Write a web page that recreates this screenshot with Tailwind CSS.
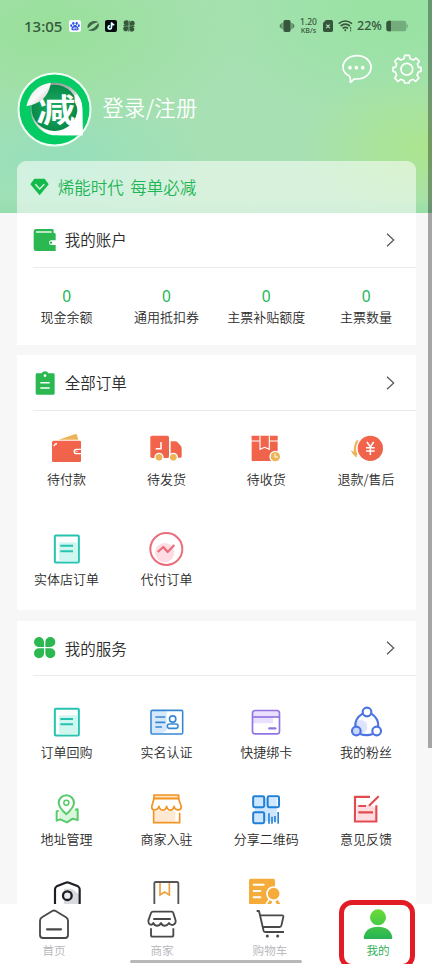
<!DOCTYPE html>
<html lang="zh-CN">
<head>
<meta charset="utf-8">
<meta name="viewport" content="width=device-width, initial-scale=1">
<title>我的</title>
<script src="https://cdn.jsdelivr.net/npm/@tailwindcss/browser@4"></script>
</head>
<body class="bg-[#f7f7f7]">
<div class="relative flex flex-col w-[432px] h-[964px] overflow-hidden bg-[#f7f7f7] font-['Noto_Sans_CJK_SC','Noto_Sans',sans-serif] font-[350] text-[#2b2b2b]">

  <!-- Header -->
  <header class="shrink-0 h-[212.5px] bg-[linear-gradient(to_bottom,transparent_93%,rgba(138,218,166,0.55)_100%),radial-gradient(ellipse_130px_80px_at_425px_148px,#abe590_5%,transparent_100%),radial-gradient(ellipse_200px_110px_at_50px_30px,#99e09a_0%,transparent_100%),radial-gradient(ellipse_150px_80px_at_60px_160px,#95dfbb_0%,transparent_100%),radial-gradient(ellipse_200px_120px_at_400px_10px,#9ae2a4_20%,transparent_100%),linear-gradient(#a7e0b3,#a7e0b3)]">
    <!-- Status bar -->
    <div class="flex items-center h-[52px] pl-6 pr-6 text-[#36573c] font-['Noto_Sans']">
      <span class="w-[45px] text-[15px] leading-none font-medium">13:05</span>
      <div class="flex gap-[6px]">
        <svg width="12" height="12" viewBox="0 0 36 36"><rect width="36" height="36" rx="7" fill="#fff"/><g fill="#3159e0"><ellipse cx="13" cy="10" rx="3.4" ry="5"/><ellipse cx="23" cy="10" rx="3.4" ry="5"/><ellipse cx="6.500" cy="17" rx="3" ry="4.300"/><ellipse cx="29.500" cy="17" rx="3" ry="4.300"/><path d="M18 15c6 0 11 8 11 12s-5 5-11 4c-6 1-11 0-11-4s5-12 11-12Z"/></g><path d="M13 23v4h4v-6M21 21v6h4" stroke="#fff" stroke-width="2" fill="none"/></svg>
        <svg width="12" height="12" viewBox="0 0 36 36" fill="#41664a"><path d="M2 24C-2 10 16-2 34 6 20 4 8 10 2 24ZM34 8C42 24 20 38 3 30 18 32 28 24 34 8Z"/><path d="M34 6C24 8 14 12 7 22L2 25Q4 6 22 3ZM3 30c10-2 20-5 26-15l5-4Q33 28 17 33Z"/></svg>
        <svg width="12" height="12" viewBox="0 0 36 36"><rect width="36" height="36" rx="6" fill="#08090d"/><path d="M20 7v15a5 5 0 1 1-5-5M20 8c1 4 4 6 8 6" transform="translate(-1.500 1)" stroke="#26e4e4" stroke-width="4" fill="none"/><path d="M20 7v15a5 5 0 1 1-5-5M20 8c1 4 4 6 8 6" stroke="#fff" stroke-width="4" fill="none"/></svg>
        <svg width="12" height="12" viewBox="0 0 36 36" fill="#36573c"><path d="M17 17V5C15-1 2-1 2 8c0 5 4 6 8 6-6 0-10 0-9 4ZM19 17h12c6-2 6-15-3-15-5 0-6 4-6 8 0-6 0-10-3-9ZM19 19v12c2 6 15 6 15-3 0-5-4-6-8-6 6 0 10 0 9-4ZM17 19H5c-6 2-6 15 3 15 5 0 6-4 6-8 0 6 0 10 3 9Z"/></svg>
      </div>
      <div class="flex items-center ml-auto">
        <svg width="16" height="14" viewBox="0 0 48 42" class="mr-1"><rect x="13" y="3" width="22" height="36" rx="6" fill="#36573c"/><path d="M9 12v18M4 16v10M39 12v18M44 16v10" stroke="#36573c" stroke-width="2.800"/></svg>
        <div class="flex flex-col w-[19px] mr-[5px] text-center font-medium"><span class="text-[8.500px] leading-[9px]">1.20</span><span class="text-[7.200px] leading-[9px] whitespace-nowrap">KB/s</span></div>
        <svg width="10" height="12" viewBox="0 0 30 36" class="mr-[5px]"><path d="M9 0h16q5 0 5 5v26q0 5-5 5H5q-5 0-5-5V9Z" fill="#36573c"/><path d="m10 14 10 10m0-10L10 24" stroke="#a8dfb0" stroke-width="3.500"/></svg>
        <svg width="15" height="12" viewBox="0 0 45 36" fill="none" stroke="#36573c" stroke-width="4.800" class="mr-[4px]"><path d="M2 11Q22-5 42 11M8 18Q22 7 36 18M14 25q8-6 16 0"/><circle cx="22" cy="31" r="3" fill="#36573c" stroke="none"/><path d="M38 21v6m0 2v5" stroke-width="3"/></svg>
        <span class="w-[25px] mr-[4px] pt-px text-[12.500px] leading-none font-medium">22%</span>
        <svg width="22" height="12" viewBox="0 0 66 36"><rect x="1" y="2" width="60" height="32" rx="8" fill="#36573c" fill-opacity=".38"/><path d="M9 2h6v32H9q-8 0-8-8V10q0-8 8-8Z" fill="#36573c"/><path d="M62 11q4 3 4 7t-4 7Z" fill="#36573c" fill-opacity=".38"/></svg>
      </div>
    </div>
    <!-- User -->
    <div class="flex h-[109px] pl-[16.500px] pr-[9.500px]">
      <svg class="mt-[19.500px] shrink-0" width="75" height="75" viewBox="50 215 224 224">
        <defs>
          <linearGradient id="peel" x1="0" y1="0" x2="1" y2="1"><stop offset="0" stop-color="#d5d9d7"/><stop offset=".5" stop-color="#fbfbfb"/><stop offset="1" stop-color="#a9afac"/></linearGradient>
          <linearGradient id="rim" x1="0" y1="0" x2=".8" y2="1"><stop offset="0" stop-color="#7c8480"/><stop offset=".4" stop-color="#a9b0ac"/><stop offset=".7" stop-color="#fff"/></linearGradient>
          <radialGradient id="well"><stop offset="0" stop-color="#1fae62"/><stop offset="1" stop-color="#078a49"/></radialGradient>
        </defs>
        <circle cx="162" cy="327" r="107.500" fill="#05cb65" stroke="#f4fff7" stroke-width="6"/>
        <path d="M155 247c50-2 88 30 90 76l1 81h-90a80 80 0 0 1-1-157Z" fill="url(#rim)"/>
        <circle cx="162" cy="322" r="69" fill="url(#well)"/>
        <text x="108" y="364" font-size="94" font-weight="700" textLength="116" lengthAdjust="spacingAndGlyphs" fill="#fff" font-family="Noto Sans CJK SC">减</text>
        <path d="M222 283h7q16 16 16 40l1 81h-74q44-7 58-42 8-28-8-59Z" fill="#fff"/>
        <path d="M151 247c-6 36-25 62-73 70 9-38 33-65 73-70Z" fill="url(#peel)"/>
      </svg>
      <div class="mt-[40px] ml-[11px] h-[30px] leading-[30px] text-[21.300px] tracking-[0.300px] text-white">登录/注册</div>
      <div class="flex gap-[18px] ml-auto mt-[1px]">
        <svg width="32" height="32" viewBox="374 160 96 96" fill="none" stroke="#fff" stroke-width="5"><path d="M400 230c-14-7-20-15-20-27 0-20 18-35 42-35s42 15 42 35-18 35-42 35l-8 0-12 10q2-10-2-18Z" stroke-linejoin="round"/><g fill="#fff" stroke="none"><circle cx="401" cy="204" r="5.500"/><circle cx="420" cy="204" r="5.500"/><circle cx="439" cy="204" r="5.500"/></g></svg>
        <svg width="32" height="32" viewBox="524 160 96 96" fill="none" stroke="#fff" stroke-width="5" stroke-linejoin="round"><path d="M565 167h14l2 10 10 4 8-6 10 10-6 8 4 10 7 0v12l-8 2-4 10 6 8-10 10-8-6-10 4-2 7h-13l-2-7-10-4-8 6-10-10 6-8-4-10-7-2v-12l7 0 4-10-6-8 10-10 8 6 10-4Z"/><circle cx="571.500" cy="208.500" r="17.500"/></svg>
      </div>
    </div>
    <!-- Slogan banner -->
    <div class="flex items-center ml-[16.700px] w-[399.300px] h-[51.500px] pl-[13px] rounded-t-[9px] bg-white/55">
      <svg width="19" height="18" viewBox="90 82 57 54"><path d="M103 84h31l12 17-27 33-28-33Z" fill="#12bb4b"/><path d="m106 101 13 14 14-14" fill="none" stroke="#d3f2df" stroke-width="4.500"/></svg>
      <span class="ml-[9px] text-[16.500px] leading-6 [word-spacing:3px] text-[#21b555]">烯能时代 每单必减</span>
    </div>
  </header>

  <!-- Account -->
  <section class="shrink-0 ml-[16.700px] w-[399.300px] h-[132.500px] bg-white">
    <div class="flex items-center h-[55px] ml-4 border-b border-[#ebebeb]">
      <svg width="24" height="24" viewBox="98 234 72 72"><path d="M106 237h50q4 0 4 4v8h2q4 0 4 4v18h-13q-7 0-7 7t7 7h13v18h-59q-7 0-7-7v-51q0-8 6-8Z" fill="#2bb850"/><path d="M107 246h47" stroke="#fff" stroke-width="4"/><circle cx="152" cy="278" r="3.500" fill="#2bb850"/></svg>
      <h2 class="ml-[8px] pb-[2px] text-[15.500px] leading-6">我的账户</h2>
      <svg class="ml-auto mr-[20px]" width="11" height="14" viewBox="0 0 11 14" fill="none" stroke="#555" stroke-width="1.200"><path d="m2 .8 6.700 6.200L2 13.200"/></svg>
    </div>
    <div class="grid grid-cols-4 pt-[18.500px] text-center">
      <div><div class="font-['Noto_Sans'] font-normal text-[15.500px] leading-5 text-[#21b555]">0</div><div class="mt-[1px] text-[13px] leading-5">现金余额</div></div>
      <div><div class="font-['Noto_Sans'] font-normal text-[15.500px] leading-5 text-[#21b555]">0</div><div class="mt-[1px] text-[13px] leading-5">通用抵扣券</div></div>
      <div><div class="font-['Noto_Sans'] font-normal text-[15.500px] leading-5 text-[#21b555]">0</div><div class="mt-[1px] text-[13px] leading-5">主票补贴额度</div></div>
      <div><div class="font-['Noto_Sans'] font-normal text-[15.500px] leading-5 text-[#21b555]">0</div><div class="mt-[1px] text-[13px] leading-5">主票数量</div></div>
    </div>
  </section>

  <!-- Orders -->
  <section class="shrink-0 mt-[10px] ml-[16.700px] w-[399.300px] h-[255px] bg-white">
    <div class="flex items-center h-[56px] ml-4 border-b border-[#ebebeb]">
      <svg width="24" height="24" viewBox="100 61 72 72"><path d="M112 68h14q2-6 10-6t10 6h15q4 0 4 4v56q0 4-4 4h-49q-4 0-4-4V72q0-4 4-4Z" fill="#2bb850"/><circle cx="136" cy="75" r="4" fill="#fff"/><path d="M122 96h28M122 112h28" stroke="#fff" stroke-width="4.500"/></svg>
      <h2 class="ml-[8px] pb-[2px] text-[15.500px] leading-6">全部订单</h2>
      <svg class="ml-auto mr-[20px]" width="11" height="14" viewBox="0 0 11 14" fill="none" stroke="#555" stroke-width="1.200"><path d="m2 .8 6.700 6.200L2 13.200"/></svg>
    </div>
    <svg width="0" height="0" class="absolute"><defs><linearGradient id="red" x1="0" y1="0" x2="1" y2="1"><stop offset="0" stop-color="#f8644c"/><stop offset="1" stop-color="#e9634a"/></linearGradient></defs></svg>
    <div class="grid grid-cols-4 auto-rows-[99.500px] pt-[18px] text-center text-[13px] leading-5">
      <div class="flex flex-col items-center">
        <svg width="40" height="40" viewBox="141 237 120 120"><path d="m176 269 50-17q4-1 5 3l4 14Z" fill="#edb457"/><path d="M161 272h78q4 0 4 4v20h-14a8 8 0 0 0 0 17h14v19q0 4-4 4h-79q-4 0-4-4v-55q0-5 5-5Z" fill="url(#red)"/><path d="M160 289q1-9 11-11v5q-6 1-7 6Z" fill="#fff"/><path d="M243 300h-13a4.500 4.500 0 0 0 0 9h13Z" fill="#ee5a43"/><circle cx="231" cy="304.500" r="2" fill="#fff"/></svg>
        <span class="-mt-[0.500px]">待付款</span>
      </div>
      <div class="flex flex-col items-center">
        <svg width="40" height="40" viewBox="440 237 120 120"><path d="M458 257h46q5 0 5 5v62h-51q-5 0-5-5v-57q0-5 5-5Z" fill="url(#red)"/><path d="M514 274h13q5 0 9 4l8 9q3 3 3 8v24q0 4-4 4h-29Z" fill="url(#red)"/><path d="M485 276v20h-16" stroke="#fff" stroke-width="4.500" fill="none"/><g fill="#edb457" stroke="#fff" stroke-width="4"><circle cx="479" cy="322" r="12"/><circle cx="522" cy="322" r="12"/></g></svg>
        <span class="-mt-[0.500px]">待发货</span>
      </div>
      <div class="flex flex-col items-center">
        <svg width="40" height="40" viewBox="91 237 120 120"><rect x="108" y="257" width="78" height="76" rx="2" fill="url(#red)"/><path d="M107 273h26m28 0h26" stroke="#fff" stroke-width="3.500"/><path d="M133 257v41l14-6 14 6v-41" fill="none" stroke="#fff" stroke-width="3.500"/><circle cx="179" cy="320" r="16" fill="#edb457" stroke="#fff" stroke-width="4"/><path d="M178 311v10h9" stroke="#fff" stroke-width="3" fill="none"/></svg>
        <span class="-mt-[0.500px]">待收货</span>
      </div>
      <div class="flex flex-col items-center">
        <svg width="40" height="40" viewBox="390 237 120 120"><path d="M425 271q-14 20-3 45" stroke="#edb457" stroke-width="6" fill="none"/><path d="M404 301l9 4q-1-20 12-34l-5 15q-5 18 3 35l-3 1q-10-7-16-21Z" fill="#edb457"/><circle cx="463" cy="295" r="38" fill="url(#red)"/><path d="m453 276 10 15 10-15M463 291v24M450 293h26M450 303h26" stroke="#fff" stroke-width="4.500" fill="none"/></svg>
        <span class="-mt-[0.500px]">退款/售后</span>
      </div>
      <div class="flex flex-col items-center">
        <svg width="40" height="40" viewBox="141 54 120 120"><rect x="164.500" y="73.500" width="72" height="81" rx="3" fill="#fff" stroke="#25c3b0" stroke-width="6"/><path d="M177 94h57v57h-57Z" fill="#cff7f0"/><path d="M181 104h38M181 121h38" stroke="#25c3b0" stroke-width="6"/></svg>
        <span>实体店订单</span>
      </div>
      <div class="flex flex-col items-center">
        <svg width="40" height="40" viewBox="440 54 120 120" fill="none" stroke="#ea6d7c" stroke-width="6"><circle cx="496" cy="125" r="29" fill="#ffdbe3" stroke="none"/><circle cx="501" cy="114" r="48"/><path d="m475 123 17-15 13 15 20-21" stroke-width="6.500" stroke-linejoin="round"/></svg>
        <span>代付订单</span>
      </div>
    </div>
  </section>

  <!-- Services -->
  <section class="flex-1 min-h-0 overflow-hidden mt-[11px] ml-[16.700px] w-[399.300px] bg-white">
    <div class="flex items-center h-[55px] ml-4 border-b border-[#ebebeb]">
      <svg width="24" height="24" viewBox="98 380 72 72" fill="#2bb850"><path d="M131 413h-14a15 15 0 1 1 14-15ZM135 413v-15a15 15 0 1 1 15 15ZM131 417v15a15 15 0 1 1-15-15ZM135 417h15a15 15 0 1 1-15 15Z"/></svg>
      <h2 class="ml-[8px] pb-[1px] text-[15.500px] leading-6">我的服务</h2>
      <svg class="ml-auto mr-[20px]" width="11" height="14" viewBox="0 0 11 14" fill="none" stroke="#555" stroke-width="1.200"><path d="m2 .8 6.700 6.200L2 13.200"/></svg>
    </div>
    <div class="grid grid-cols-4 auto-rows-[87.400px] pt-[25.700px] text-center text-[13px] leading-5">
      <div class="flex flex-col items-center">
        <svg width="40" height="40" viewBox="141 35 120 120"><rect x="164.500" y="55.500" width="72" height="80" rx="3" fill="#fff" stroke="#25c3b0" stroke-width="6"/><path d="M177 75h57v57h-57Z" fill="#cff7f0"/><path d="M181 86h38M181 102h38" stroke="#25c3b0" stroke-width="6"/></svg>
        <span>订单回购</span>
      </div>
      <div class="flex flex-col items-center">
        <svg width="40" height="40" viewBox="440 35 120 120" fill="none" stroke="#3788d4" stroke-width="4.800"><path d="M456 62h46v58l-14 9h-32Z" fill="#d5e8fc" stroke="none"/><rect x="455" y="60" width="95" height="71" rx="4"/><path d="M468 80h30M468 96h30M468 110h20" stroke-width="5"/><circle cx="520" cy="86" r="9.500"/><rect x="504" y="101" width="32" height="13" rx="6"/></svg>
        <span>实名认证</span>
      </div>
      <div class="flex flex-col items-center">
        <svg width="40" height="40" viewBox="91 35 120 120" fill="none" stroke="#9275e3" stroke-width="5"><path d="M112 62h77v17h-17v20h-60Z" fill="#e8e0fd" stroke="none"/><rect x="110.500" y="60.500" width="81" height="70" rx="8"/><path d="M111 80h80"/><path d="M161 114h18" stroke-width="7" stroke-linecap="round"/></svg>
        <span>快捷绑卡</span>
      </div>
      <div class="flex flex-col items-center">
        <svg width="40" height="40" viewBox="390 35 120 120" fill="none" stroke="#4c74e3" stroke-width="6.500"><circle cx="434" cy="109" r="20" fill="#dde4fd" stroke="none"/><path d="M440 70q-24 14-22 40M466 70q22 14 21 39M432 131q21 7 38 0"/><circle cx="453" cy="65" r="13" fill="#fff"/><circle cx="421" cy="122" r="13" fill="#c8d8fb"/><circle cx="482" cy="122" r="13" fill="#fff"/></svg>
        <span>我的粉丝</span>
      </div>
      <div class="flex flex-col items-center">
        <svg width="40" height="40" viewBox="141 297 120 120" fill="none" stroke="#5acb6a" stroke-width="6" stroke-linejoin="round"><path d="M178 358l22 20 20-20 13-2v34l-16-6-15 12-24-8Z" fill="#d8f7dc" stroke="none"/><path d="M199 373c-15-14-23-24-23-34a23 23 0 0 1 46 0c0 10-8 20-23 34Z" fill="#fff"/><circle cx="199" cy="338" r="7.500" stroke-width="4.500"/><path d="M176 362l-6 2v28l11-4 20 9 17-11 15 4v-32l-8 1"/></svg>
        <span>地址管理</span>
      </div>
      <div class="flex flex-col items-center">
        <svg width="40" height="40" viewBox="440 297 120 120" fill="none" stroke="#f19424" stroke-width="5" stroke-linejoin="round"><path d="M465 363h63v34h-63Z" fill="#ffe9d2" stroke="none"/><path d="M464 315h74v11h-74Z" fill="#ffe0b8"/><path d="M463 362v36h78v-30"/><path d="M464 326l-7 24c0 13 18 14 22-1 3 15 20 15 23 0 3 15 20 15 22 0 4 15 22 13 22 1l-8-24Z" fill="#fff"/></svg>
        <span>商家入驻</span>
      </div>
      <div class="flex flex-col items-center">
        <svg width="40" height="40" viewBox="91 297 120 120" fill="none" stroke="#2080d7" stroke-width="6"><path d="M118 324h65v70h-65Z" fill="#cfe6ff" stroke="none"/><rect x="112.500" y="318.500" width="33" height="33" rx="4" fill="#cfe6ff"/><path d="M160 318.500h26q4 0 4 4v25q0 4-4 4h-26q-4 0-4-4v-25q0-4 4-4Z"/><rect x="112.500" y="366.500" width="33" height="33" rx="4" fill="#cfe6ff"/><path d="M160 370v31M169 380v21M178 378v19M187.500 366v35" stroke-width="4.800"/></svg>
        <span>分享二维码</span>
      </div>
      <div class="flex flex-col items-center">
        <svg width="40" height="40" viewBox="390 297 120 120" fill="none" stroke="#e24c50" stroke-width="6.500"><path d="M423 345h41l16 10v37h-57Z" fill="#ffdcdf" stroke="none"/><path d="M462 320.500h-45v74h64v-49"/><path d="m459 347 29-28M427 348h23M427 367h44"/></svg>
        <span>意见反馈</span>
      </div>
      <div class="flex flex-col items-center">
        <svg width="40" height="40" viewBox="141 49 120 120" fill="none" stroke="#1c1e26" stroke-width="6.500" stroke-linejoin="round"><path d="M192 87h24l22 18v28h-46Z" fill="#d9d9df" stroke="none"/><path d="M165 135V89q0-6 5-9l27-11q5-2 10 0l27 11q5 3 5 9v46"/><circle cx="202" cy="108" r="13" stroke-width="7" fill="#ececf0"/></svg>
      </div>
      <div class="flex flex-col items-center">
        <svg width="40" height="40" viewBox="440 49 120 120" fill="none" stroke="#555" stroke-width="5.500"><path d="M465 135V71q0-4 4-4h64q4 0 4 4v64"/><path d="M482 70v36l14-9 14 9V70" stroke="#f2a03c" stroke-width="5"/></svg>
      </div>
      <div class="flex flex-col items-center">
        <svg width="40" height="40" viewBox="91 49 120 120"><path d="M105 57h68q5 0 5 5v72h-78V62q0-5 5-5Z" fill="#f6ac3b"/><path d="M114 75h30M114 94h20M114 113h20" stroke="#fff" stroke-width="6" stroke-linecap="round"/><path d="m162 112-16 26h60l-18-26Z" fill="#fff"/><path d="m164 119-11 16h12l5-10ZM184 119l12 16h-12l-5-10Z" fill="#f6ac3b"/><circle cx="174" cy="102" r="20" fill="#f6ac3b" stroke="#fff" stroke-width="5"/></svg>
      </div>
    </div>
  </section>

  <!-- Tab bar -->
  <nav class="shrink-0 grid grid-cols-4 h-[60px] bg-white text-center text-[11.600px] leading-4 text-[#b4b4b8]">
    <a class="flex flex-col items-center pt-[1px]">
      <svg class="shrink-0" width="40" height="38" viewBox="102 138 120 114" fill="none" stroke="#484848" stroke-width="5.500"><path d="M126 175l31-19q5-3 10 0l31 19q6 4 6 10v43q0 9-9 9h-66q-9 0-9-9v-43q0-6 6-10Z" stroke-linejoin="round"/><path d="M141 211h42" stroke-width="6.500" stroke-linecap="round"/></svg>
      <span class="-mt-px">首页</span>
    </a>
    <a class="flex flex-col items-center pt-[1px]">
      <svg class="shrink-0" width="40" height="38" viewBox="426 138 120 114" fill="none" stroke="#484848" stroke-width="5.500" stroke-linejoin="round"><path d="M459 158h56q4 0 5 4l7 23c1 12-12 18-20 7-7 11-19 11-24 0-6 11-18 11-23 0-6 10-15 4-15-7l8-23q2-4 6-4Z"/><path d="M462 180h48" stroke-width="6" stroke-linecap="round"/><path d="M453 208v20q0 5 5 5h57q5 0 5-5v-20"/></svg>
      <span class="-mt-px">商家</span>
    </a>
    <a class="flex flex-col items-center pt-[1px]">
      <svg class="shrink-0" width="40" height="38" viewBox="102 138 120 114" fill="none" stroke="#484848" stroke-width="5.500" stroke-linejoin="round"><path d="M122 156h7l14 60q1 3 5 3h56M134 169h64q5 0 4 5l-6 26q-1 4-5 4h-50"/><circle cx="154" cy="231" r="4.500" fill="#484848" stroke="none"/><circle cx="185" cy="231" r="4.500" fill="#484848" stroke="none"/></svg>
      <span class="-mt-px">购物车</span>
    </a>
    <a class="flex flex-col items-center pt-[1px] text-[#1fae4e]">
      <svg class="shrink-0" width="40" height="38" viewBox="426 138 120 114"><defs><linearGradient id="me" x1="0" y1="0" x2="0" y2="1"><stop offset="0" stop-color="#6bdc38"/><stop offset="1" stop-color="#45c945"/></linearGradient><linearGradient id="me2" x1="0" y1="0" x2="0" y2="1"><stop offset="0" stop-color="#40c548"/><stop offset="1" stop-color="#27b355"/></linearGradient></defs><circle cx="486" cy="175" r="24" fill="url(#me)"/><path d="M443 236c2-22 20-33 43-33s41 11 43 33q0 4-4 4h-78q-4 0-4-4Z" fill="url(#me2)"/></svg>
      <span class="-mt-px">我的</span>
    </a>
  </nav>

  <!-- Overlays: home indicator, highlight frame, scrollbar -->
  <div class="absolute left-[130px] top-[960px] w-[172px] h-[3px] rounded-full bg-[#b8b8b8]"></div>
  <div class="absolute left-[339px] top-[900px] w-[76px] h-[69px] rounded-[13px] border-[5px] border-[#e21c24]"></div>
  <div class="absolute right-0 top-0 w-[4px] h-[748px] bg-black/33"></div>
</div>
</body>
</html>
